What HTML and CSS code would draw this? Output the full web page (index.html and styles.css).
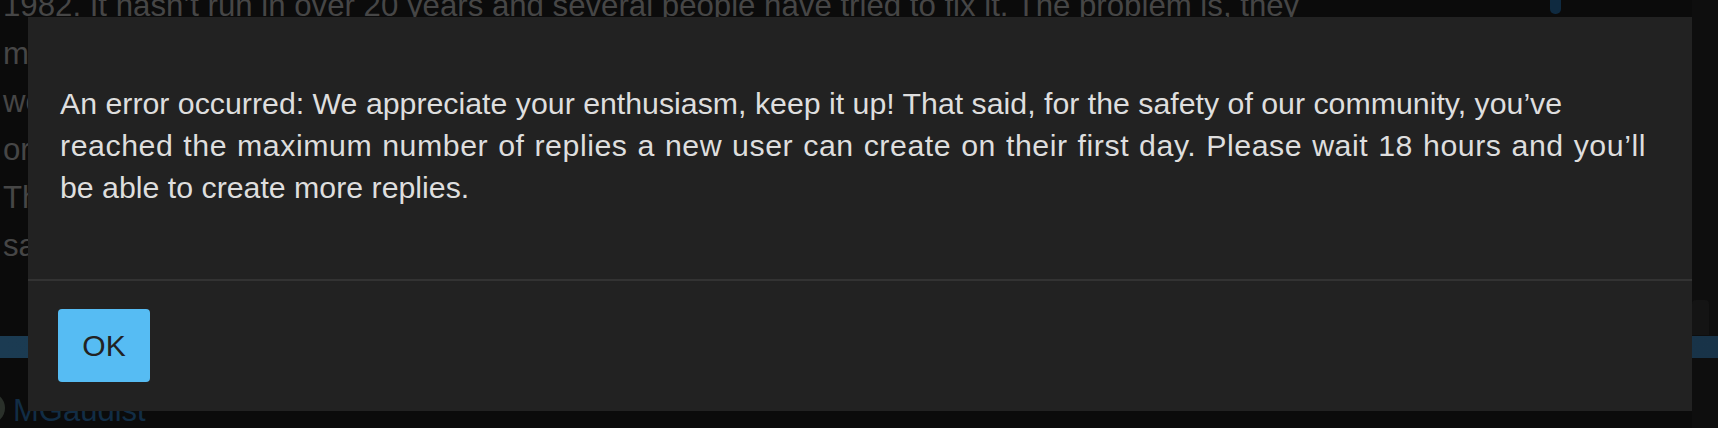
FILE: index.html
```html
<!DOCTYPE html>
<html lang="en">
<head>
  <meta charset="UTF-8" />
  <meta name="viewport" content="width=device-width, initial-scale=1.0" />
  <title>Topic</title>
  <link rel="stylesheet" href="styles.css">
</head>
<body>
  <div class="page">
    <div class="timeline-marker"></div>

    <div class="post">
      <div class="post-line">1982. It hasn’t run in over 20 years and several people have tried to fix it. The problem is, they</div>
      <div class="post-line">might not have known what they were doing, and parts went missing along the way. Now it just</div>
      <div class="post-line">won’t turn over at all, and I have no idea where to start looking for the problem with it.</div>
      <div class="post-line">or whether it is even worth the time and money to keep going with this old car project.</div>
      <div class="post-line">Thanks in advance for any help you can give me, I really appreciate it.</div>
      <div class="post-line">said the last mechanic, before he gave up on it.</div>
    </div>

    <div class="post-actions">
      <div class="action-box"></div>
    </div>
    <div class="reply-bar"></div>

    <div class="author">
      <span class="avatar"></span>
      <span class="username">MGaudist</span>
    </div>

    <div class="modal">
      <div class="modal-body">
        An error occurred: We appreciate your enthusiasm, keep it up! That said, for the safety of our community, you’ve
        <span class="wide">reached the maximum number of replies a new user can create on their first day. Please wait 18 hours and you’ll</span><br>
        be able to create more replies.
      </div>
      <div class="modal-footer">
        <button class="btn-ok">OK</button>
      </div>
    </div>
  </div>
</body>
</html>
```

FILE: styles.css
```css
/* error modal over a dimmed topic page */

body {
  margin: 0;
  background: #0b0b0b;
  font-family: "Liberation Sans", Arial, sans-serif;
}

.page {
  position: relative;
  height: 428px;
  overflow: hidden;
  background: linear-gradient(to right, #0b0b0b 1692px, #0e0e0e 1692px);
}

.timeline-marker {
  position: absolute;
  left: 1550px;
  top: 0;
  width: 11px;
  height: 14px;
  background: #0f2a40;
  border-radius: 0 0 5px 5px;
}

.post {
  margin-top: -18px;
  padding-left: 3px;
  font-size: 31.2px;
  line-height: 48px;
  color: #464646;
}

.post-line {
  white-space: nowrap;
}

.post-actions {
  display: flex;
  justify-content: flex-end;
  margin-top: 30px;
  height: 35px;
}

.action-box {
  width: 17px;
  margin-right: 9px;
  background: #141414;
  border-radius: 4px 4px 0 0;
}

.reply-bar {
  margin-top: 1px;
  height: 22px;
  background: linear-gradient(to right, #1b3b52, #183348);
}

.author {
  display: flex;
  align-items: center;
  margin-top: 30px;
}

.avatar {
  width: 32px;
  height: 32px;
  margin-left: -27px;
  border-radius: 50%;
  background: #2a302a;
}

.username {
  margin-left: 8px;
  padding-top: 7px;
  font-size: 31px;
  line-height: 32px;
  color: #122d45;
}

.modal {
  position: absolute;
  left: 28px;
  top: 17px;
  width: 1664px;
  height: 394px;
  background: #222222;
  display: flex;
  flex-direction: column;
}

.modal-body {
  padding: 66px 32px 0 32px;
  height: 196px;
  font-size: 30.3px;
  line-height: 42px;
  color: #dedede;
}

.modal-body .wide {
  letter-spacing: 0.55px;
  word-spacing: 1px;
  white-space: nowrap;
}

.modal-footer {
  border-top: 2px solid #333333;
  padding: 28px 30px;
}

.btn-ok {
  width: 92px;
  height: 73px;
  border: none;
  border-radius: 4px;
  background: #56bcf3;
  color: #222222;
  font-family: "Liberation Sans", Arial, sans-serif;
  font-size: 30px;
  padding: 0;
}
```
